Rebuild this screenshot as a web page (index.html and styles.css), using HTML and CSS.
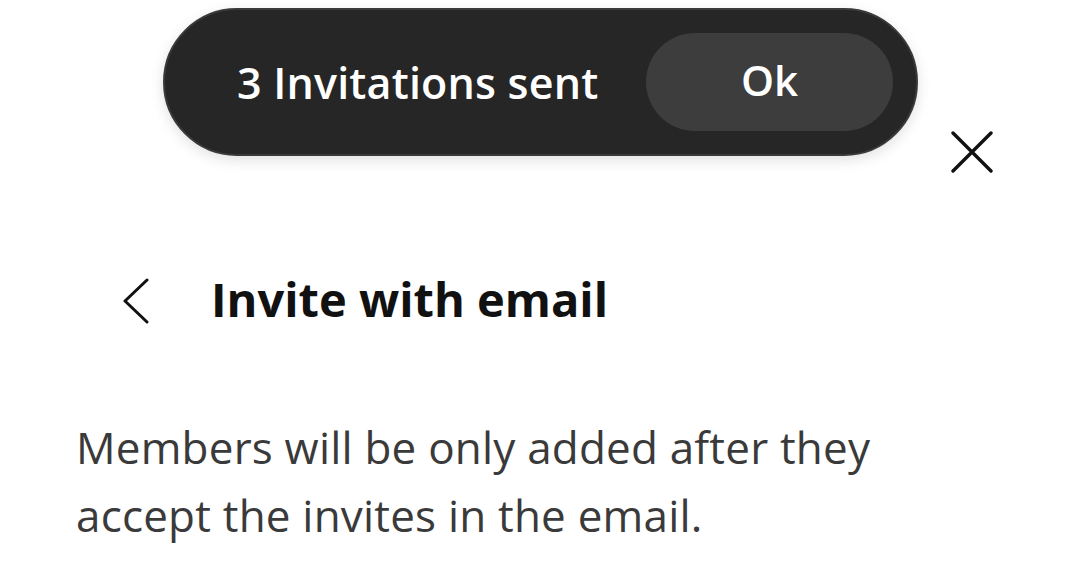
FILE: index.html
```html
<!DOCTYPE html>
<html lang="en">

<head>
    <meta charset="UTF-8">
    <meta name="viewport" content="width=device-width, initial-scale=1.0">
    <title>Invite with email</title>
    <link rel="stylesheet" href="styles.css">
</head>

<body>
    <div class="toast">
        <span class="toast-text">3 Invitations sent</span>
        <button class="toast-btn">Ok</button>
    </div>

    <div class="panel">
        <div class="close-row">
            <button class="icon-btn close-btn" aria-label="Close">
                <svg width="44" height="42" viewBox="0 0 44 42">
                    <path d="M3 2 L41 40 M41 2 L3 40" stroke="#111" stroke-width="3.4" stroke-linecap="round" fill="none" />
                </svg>
            </button>
        </div>

        <div class="header">
            <button class="icon-btn back-btn" aria-label="Back">
                <svg width="28" height="46" viewBox="0 0 28 46">
                    <path d="M25 2 L3 23 L25 44" stroke="#111" stroke-width="3" stroke-linecap="round" stroke-linejoin="round" fill="none" />
                </svg>
            </button>
            <h2>Invite with email</h2>
        </div>

        <p class="desc">Members will be only added after they accept the invites in the email.</p>
    </div>
</body>

</html>
```

FILE: styles.css
```css
* {
    margin: 0;
    padding: 0;
    box-sizing: border-box;
    font-family: "Open Sans", "Noto Sans", sans-serif;
}

body {
    background-color: #fff;
    color: #111;
}

/* Snackbar floating over the sheet */
.toast {
    position: absolute;
    top: 8px;
    left: 163px;
    width: 755px;
    height: 148px;
    display: flex;
    align-items: center;
    justify-content: space-between;
    padding: 0 23px 0 72px;
    background-color: #262626;
    border: 2px solid #3a3a3a;
    border-radius: 74px;
    box-shadow: 0 4px 14px rgba(0, 0, 0, 0.12);
}

.toast-text {
    color: #fff;
    font-size: 43px;
    font-weight: 600;
    letter-spacing: 0.2px;
}

.toast-btn {
    width: 247px;
    height: 98px;
    border: none;
    border-radius: 49px;
    background-color: #3d3d3d;
    color: #fff;
    font-size: 42px;
    font-weight: 600;
    padding-bottom: 6px;
}

.panel {
    padding: 131px 86px 0 76px;
}

.icon-btn {
    background: none;
    border: none;
    display: flex;
}

.close-row {
    display: flex;
    justify-content: flex-end;
}

.header {
    display: flex;
    align-items: center;
    gap: 61px;
    margin-top: 98px;
    padding-left: 46px;
}

.back-btn {
    margin-top: 4px;
}

.header h2 {
    font-size: 47px;
    line-height: 56px;
    font-weight: 700;
    color: #111;
}

.desc {
    margin-top: 86px;
    width: 860px;
    font-size: 44px;
    line-height: 68px;
    font-weight: 400;
    letter-spacing: 0.2px;
    color: #3a3a3a;
}
```
